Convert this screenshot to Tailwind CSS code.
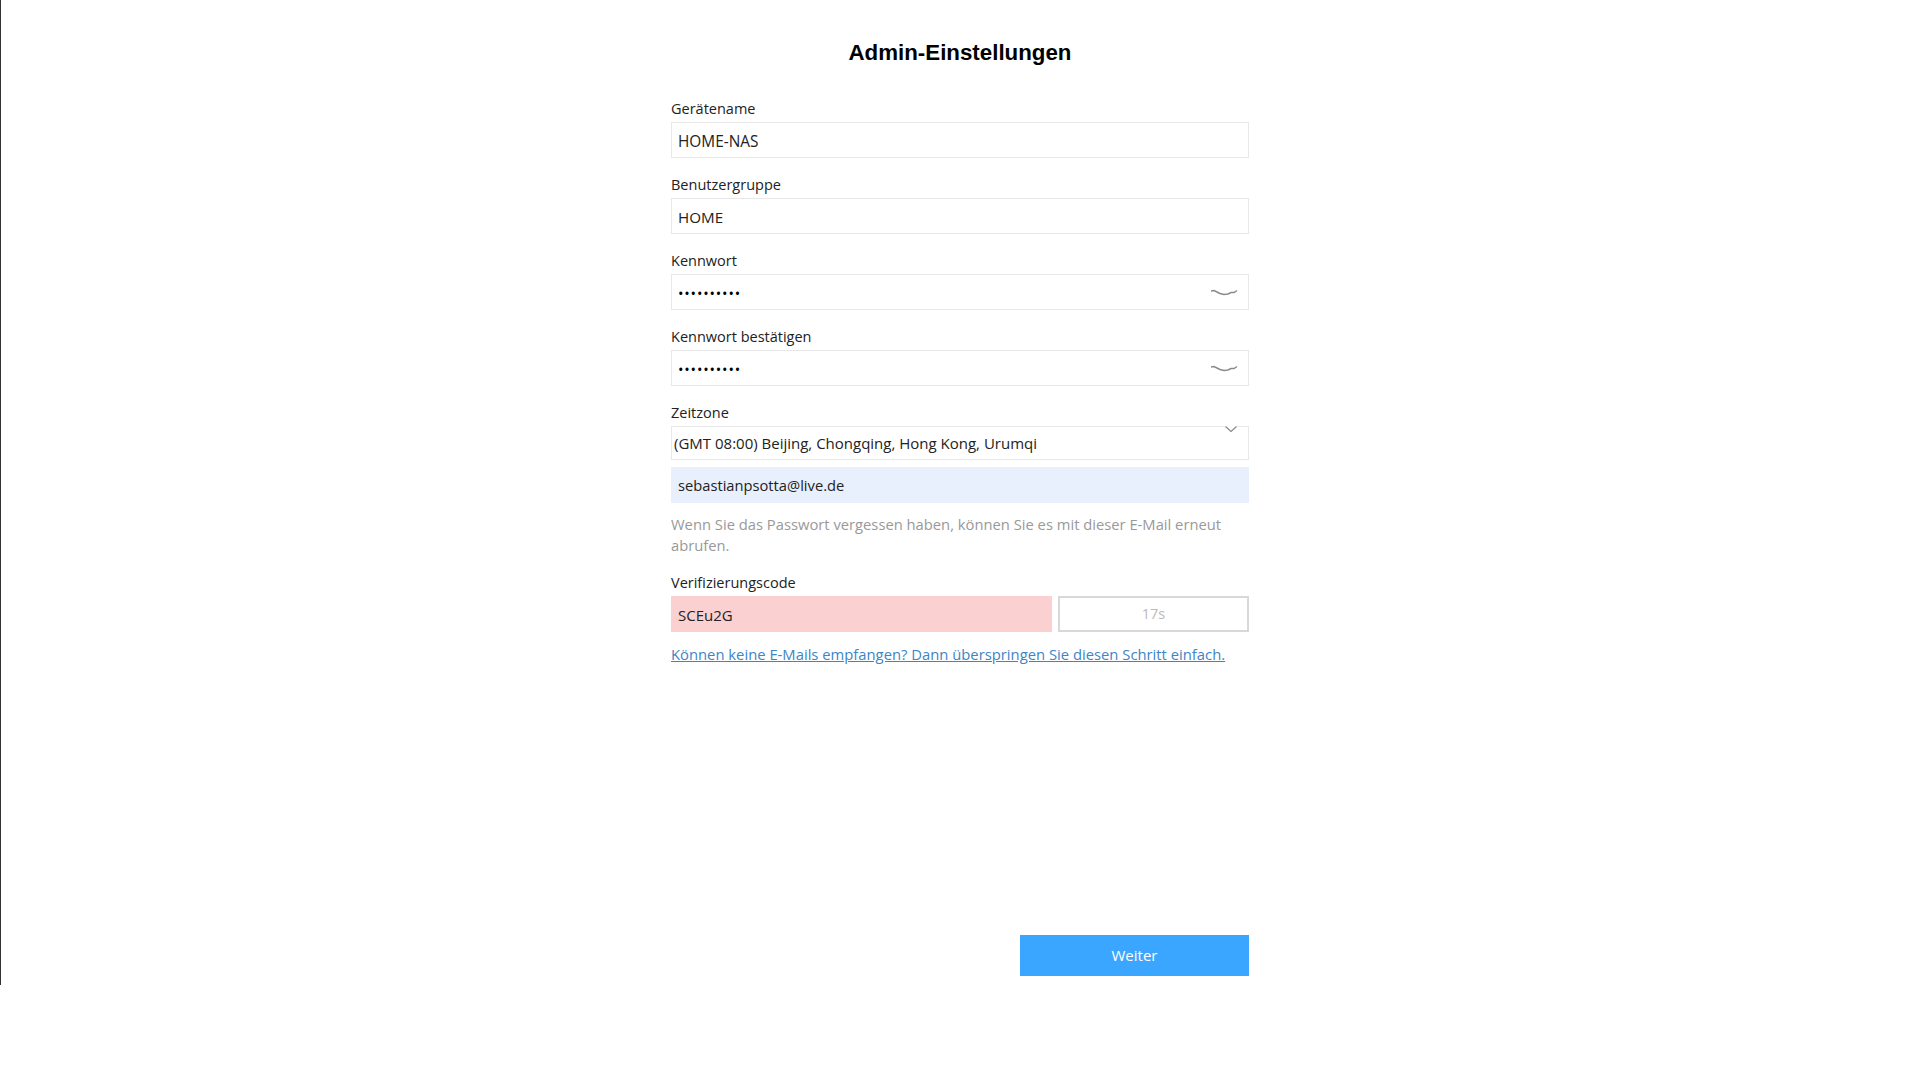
<!DOCTYPE html>
<html lang="de">
<head>
<meta charset="utf-8">
<title>Admin-Einstellungen</title>
<script src="https://cdn.jsdelivr.net/npm/@tailwindcss/browser@4"></script>
</head>
<body class="bg-white">
<div class="h-[1079px] w-[1920px] overflow-hidden bg-white font-['Open_Sans','Noto_Sans',sans-serif] text-[14.5px] text-[#222]">
  <div class="flex h-[985px] justify-center border-l border-[#333] pr-px">
    <div class="relative flex w-[578px] flex-col">
      <h1 class="mt-[37px] h-[32px] text-center font-['Liberation_Sans',sans-serif] text-[22.3px] leading-[32px] font-bold text-black">Admin-Einstellungen</h1>

      <label class="mt-[25px] block h-[28px] leading-[30px]">Gerätename</label>
      <div class="flex h-[36px] items-center border border-[#e8e8e8] pt-[3px] pl-[6px] text-[15.4px]">HOME-NAS</div>

      <label class="mt-[12px] block h-[28px] leading-[30px]">Benutzergruppe</label>
      <div class="flex h-[36px] items-center border border-[#e8e8e8] pt-[2px] pl-[6px] text-[15.2px]">HOME</div>

      <label class="mt-[12px] block h-[28px] leading-[30px]">Kennwort</label>
      <div class="flex h-[36px] items-center justify-between border border-[#e8e8e8] pr-[10px] pl-[6px]">
        <span class="pt-[3px] text-[14.5px] tracking-[0.85px] text-black">••••••••••</span>
        <svg class="mt-[2px] h-[8px] w-[28px]" viewBox="0 0 28 8" fill="none" stroke="#8a8a8a" stroke-width="1.5"><path d="M1 2 L4 1.5 L7 3 L10 4.5 L14 5.5 L18 5 L21 3.5 L24 3.5 L27 1.5"/></svg>
      </div>

      <label class="mt-[12px] block h-[28px] leading-[30px]">Kennwort bestätigen</label>
      <div class="flex h-[36px] items-center justify-between border border-[#e8e8e8] pr-[10px] pl-[6px]">
        <span class="pt-[3px] text-[14.5px] tracking-[0.85px] text-black">••••••••••</span>
        <svg class="mt-[2px] h-[8px] w-[28px]" viewBox="0 0 28 8" fill="none" stroke="#8a8a8a" stroke-width="1.5"><path d="M1 2 L4 1.5 L7 3 L10 4.5 L14 5.5 L18 5 L21 3.5 L24 3.5 L27 1.5"/></svg>
      </div>

      <label class="mt-[12px] block h-[28px] leading-[30px]">Zeitzone</label>
      <div class="relative flex h-[34px] items-center border border-[#e8e8e8] pl-[2px] text-[15px]">
        (GMT 08:00) Beijing, Chongqing, Hong Kong, Urumqi
        <svg class="absolute top-[-1px] right-[11px] h-[6px] w-[12px] bg-white" viewBox="0 0 12 6" fill="none" stroke="#8a8a8a" stroke-width="1.2"><path d="M0.5 0.5 L6 5.5 L11.5 0.5"/></svg>
      </div>

      <div class="mt-[7px] flex h-[36px] items-center bg-[#e8f0fe] pt-[1px] pl-[7px] text-[14.7px]">sebastianpsotta@live.de</div>

      <p class="mt-[11px] text-[14.75px] leading-[21px] text-[#999]">Wenn Sie das Passwort vergessen haben, können Sie es mit dieser E-Mail erneut abrufen.</p>

      <label class="mt-[13px] block h-[27px] leading-[28px]">Verifizierungscode</label>
      <div class="flex h-[36px] gap-[6px]">
        <div class="flex w-[381px] items-center bg-[#fbd0d0] pt-[2px] pl-[7px] text-[15px]">SCEu2G</div>
        <div class="flex flex-1 items-center justify-center border-2 border-[#d8d8d8] text-[#bbb]">17s</div>
      </div>

      <a href="#" class="mt-[11px] block text-[14.8px] leading-[22px] text-[#3d85c6] underline">Können keine E-Mails empfangen? Dann überspringen Sie diesen Schritt einfach.</a>

      <div class="mt-auto mb-[9px] flex justify-end">
        <button class="h-[41px] w-[229px] bg-[#3ba6ff] text-[15px] text-white">Weiter</button>
      </div>
    </div>
  </div>
</div>
</body>
</html>
